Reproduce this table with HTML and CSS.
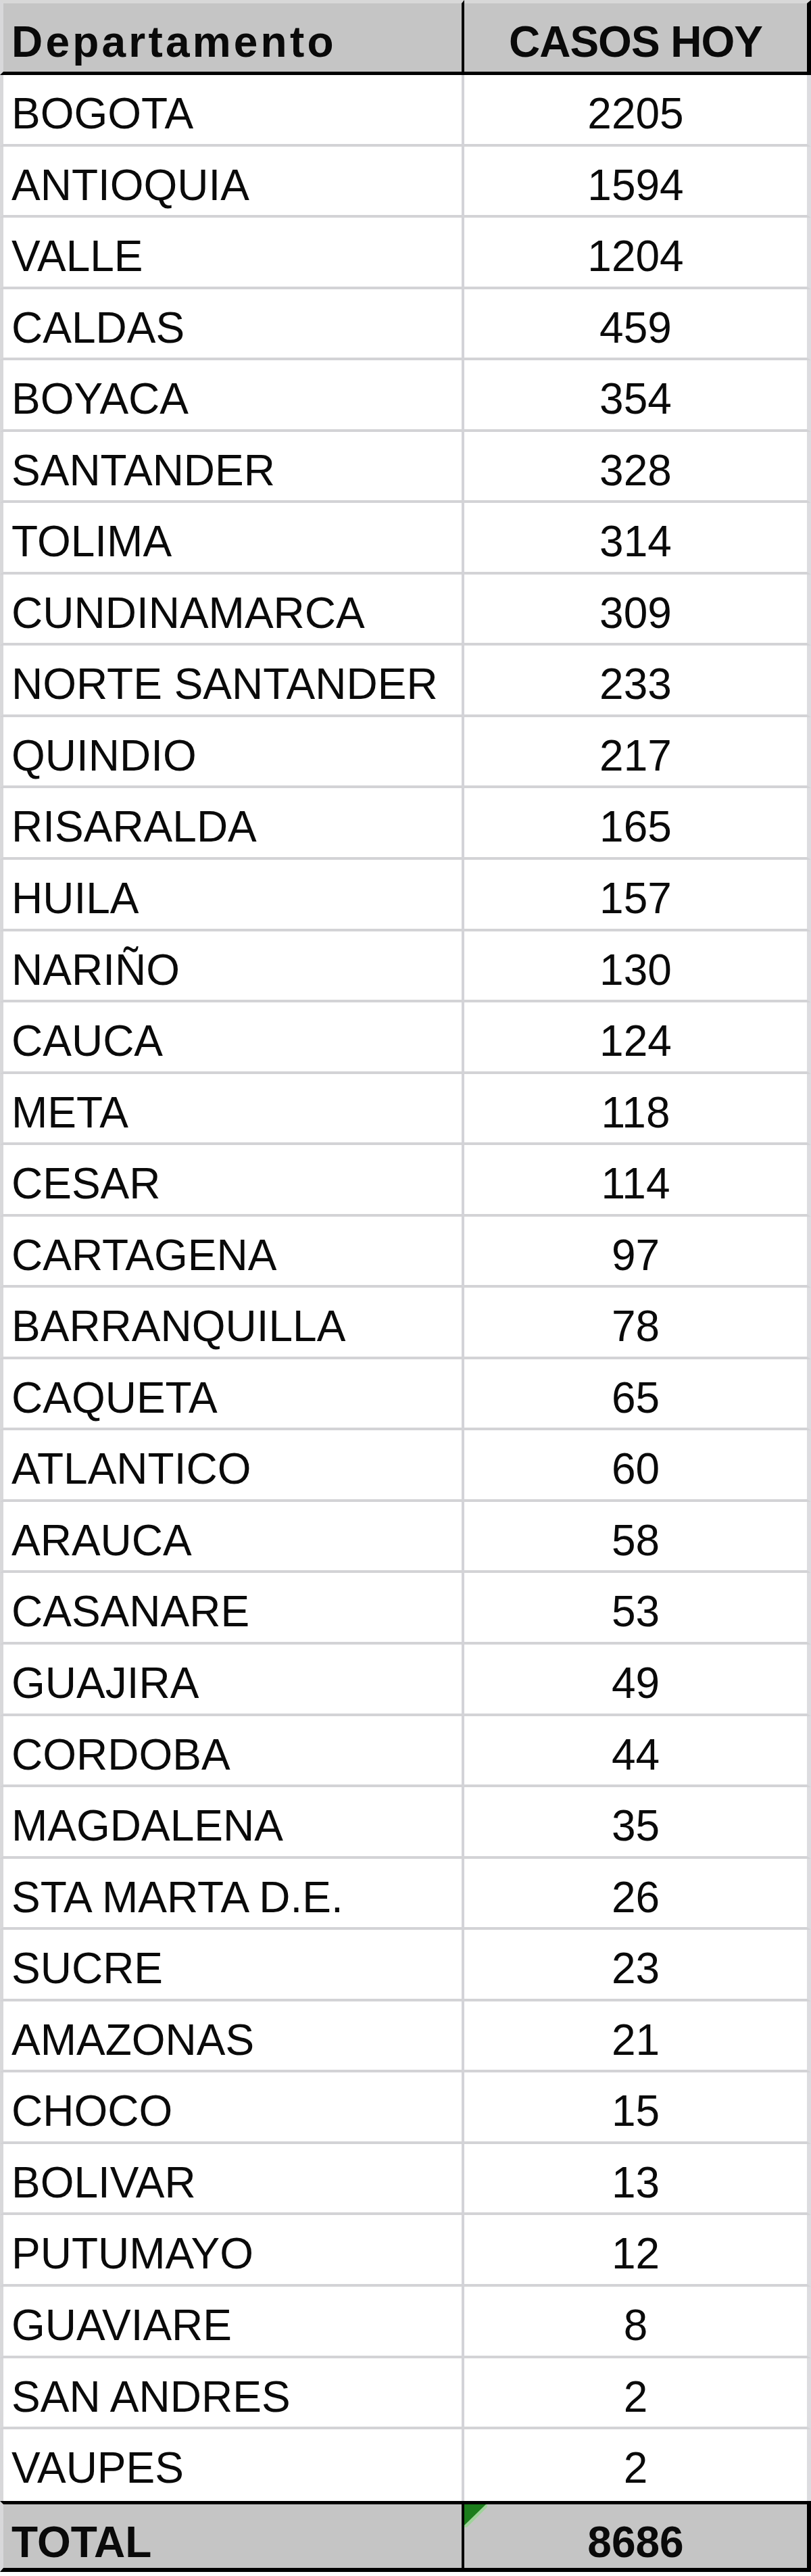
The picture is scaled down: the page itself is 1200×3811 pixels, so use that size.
FILE: index.html
```html
<!DOCTYPE html>
<html lang="es">
<head>
<meta charset="utf-8">
<title>Casos hoy por departamento</title>
<link rel="stylesheet" href="styles.css">
</head>
<body>
<div class="sheet">
  <div class="cell name head">Departamento</div>
  <div class="cell num head">CASOS HOY</div>

  <div class="cell name">BOGOTA</div><div class="cell num">2205</div>
  <div class="cell name">ANTIOQUIA</div><div class="cell num">1594</div>
  <div class="cell name">VALLE</div><div class="cell num">1204</div>
  <div class="cell name">CALDAS</div><div class="cell num">459</div>
  <div class="cell name">BOYACA</div><div class="cell num">354</div>
  <div class="cell name">SANTANDER</div><div class="cell num">328</div>
  <div class="cell name">TOLIMA</div><div class="cell num">314</div>
  <div class="cell name">CUNDINAMARCA</div><div class="cell num">309</div>
  <div class="cell name">NORTE SANTANDER</div><div class="cell num">233</div>
  <div class="cell name">QUINDIO</div><div class="cell num">217</div>
  <div class="cell name">RISARALDA</div><div class="cell num">165</div>
  <div class="cell name">HUILA</div><div class="cell num">157</div>
  <div class="cell name">NARIÑO</div><div class="cell num">130</div>
  <div class="cell name">CAUCA</div><div class="cell num">124</div>
  <div class="cell name">META</div><div class="cell num">118</div>
  <div class="cell name">CESAR</div><div class="cell num">114</div>
  <div class="cell name">CARTAGENA</div><div class="cell num">97</div>
  <div class="cell name">BARRANQUILLA</div><div class="cell num">78</div>
  <div class="cell name">CAQUETA</div><div class="cell num">65</div>
  <div class="cell name">ATLANTICO</div><div class="cell num">60</div>
  <div class="cell name">ARAUCA</div><div class="cell num">58</div>
  <div class="cell name">CASANARE</div><div class="cell num">53</div>
  <div class="cell name">GUAJIRA</div><div class="cell num">49</div>
  <div class="cell name">CORDOBA</div><div class="cell num">44</div>
  <div class="cell name">MAGDALENA</div><div class="cell num">35</div>
  <div class="cell name">STA MARTA D.E.</div><div class="cell num">26</div>
  <div class="cell name">SUCRE</div><div class="cell num">23</div>
  <div class="cell name">AMAZONAS</div><div class="cell num">21</div>
  <div class="cell name">CHOCO</div><div class="cell num">15</div>
  <div class="cell name">BOLIVAR</div><div class="cell num">13</div>
  <div class="cell name">PUTUMAYO</div><div class="cell num">12</div>
  <div class="cell name">GUAVIARE</div><div class="cell num">8</div>
  <div class="cell name">SAN ANDRES</div><div class="cell num">2</div>
  <div class="cell name last">VAUPES</div><div class="cell num last">2</div>

  <div class="cell name total">TOTAL</div>
  <div class="cell num total">
    <svg class="flag" width="34" height="34" viewBox="0 0 34 34" aria-hidden="true">
      <polygon points="0,0 38,0 0,38" fill="#9fd39a"/>
      <polygon points="0,0 32,0 0,31" fill="#1c7d1c"/>
    </svg>
    8686
  </div>
</div>
</body>
</html>
```

FILE: styles.css
```css
html, body {
  margin: 0;
  padding: 0;
  background: #ffffff;
}

.sheet {
  display: grid;
  grid-template-columns: 687px 513px;
  grid-auto-rows: 105.56px;
  grid-template-rows: 111px;
  width: 1200px;
  font-family: "Liberation Sans", Arial, sans-serif;
  font-size: 64px;
  line-height: 64px;
  color: #0a0a0a;
}

.cell {
  box-sizing: border-box;
  padding-top: 25px;
  white-space: nowrap;
  position: relative;
  border-bottom: 4px solid #d3d3d6;
}

.name {
  padding-left: 12px;
  border-left: 5px solid #d8d8da;
  border-right: 4px solid #d3d3d8;
}

.num {
  text-align: center;
  border-right: 6px solid #dcdce0;
}

.head {
  background: #c5c5c5;
  border-top: 5px solid #d8d8d8;
  border-bottom: 5px solid #000;
  font-weight: 700;
  letter-spacing: 0;
}

.head.name {
  border-right-color: #000;
  letter-spacing: 4.2px;
}

.head.num {
  border-right-color: #000;
  letter-spacing: -1px;
}

.last {
  border-bottom: 0;
}

.total {
  background: #c5c5c5;
  border-top: 5px solid #000;
  border-bottom: 6px solid #000;
  font-weight: 700;
  padding-top: 24px;
}

.total.name {
  border-right-color: #000;
}

.total.num {
  border-right-color: #000;
}

.flag {
  position: absolute;
  left: 0;
  top: 0;
}
```
